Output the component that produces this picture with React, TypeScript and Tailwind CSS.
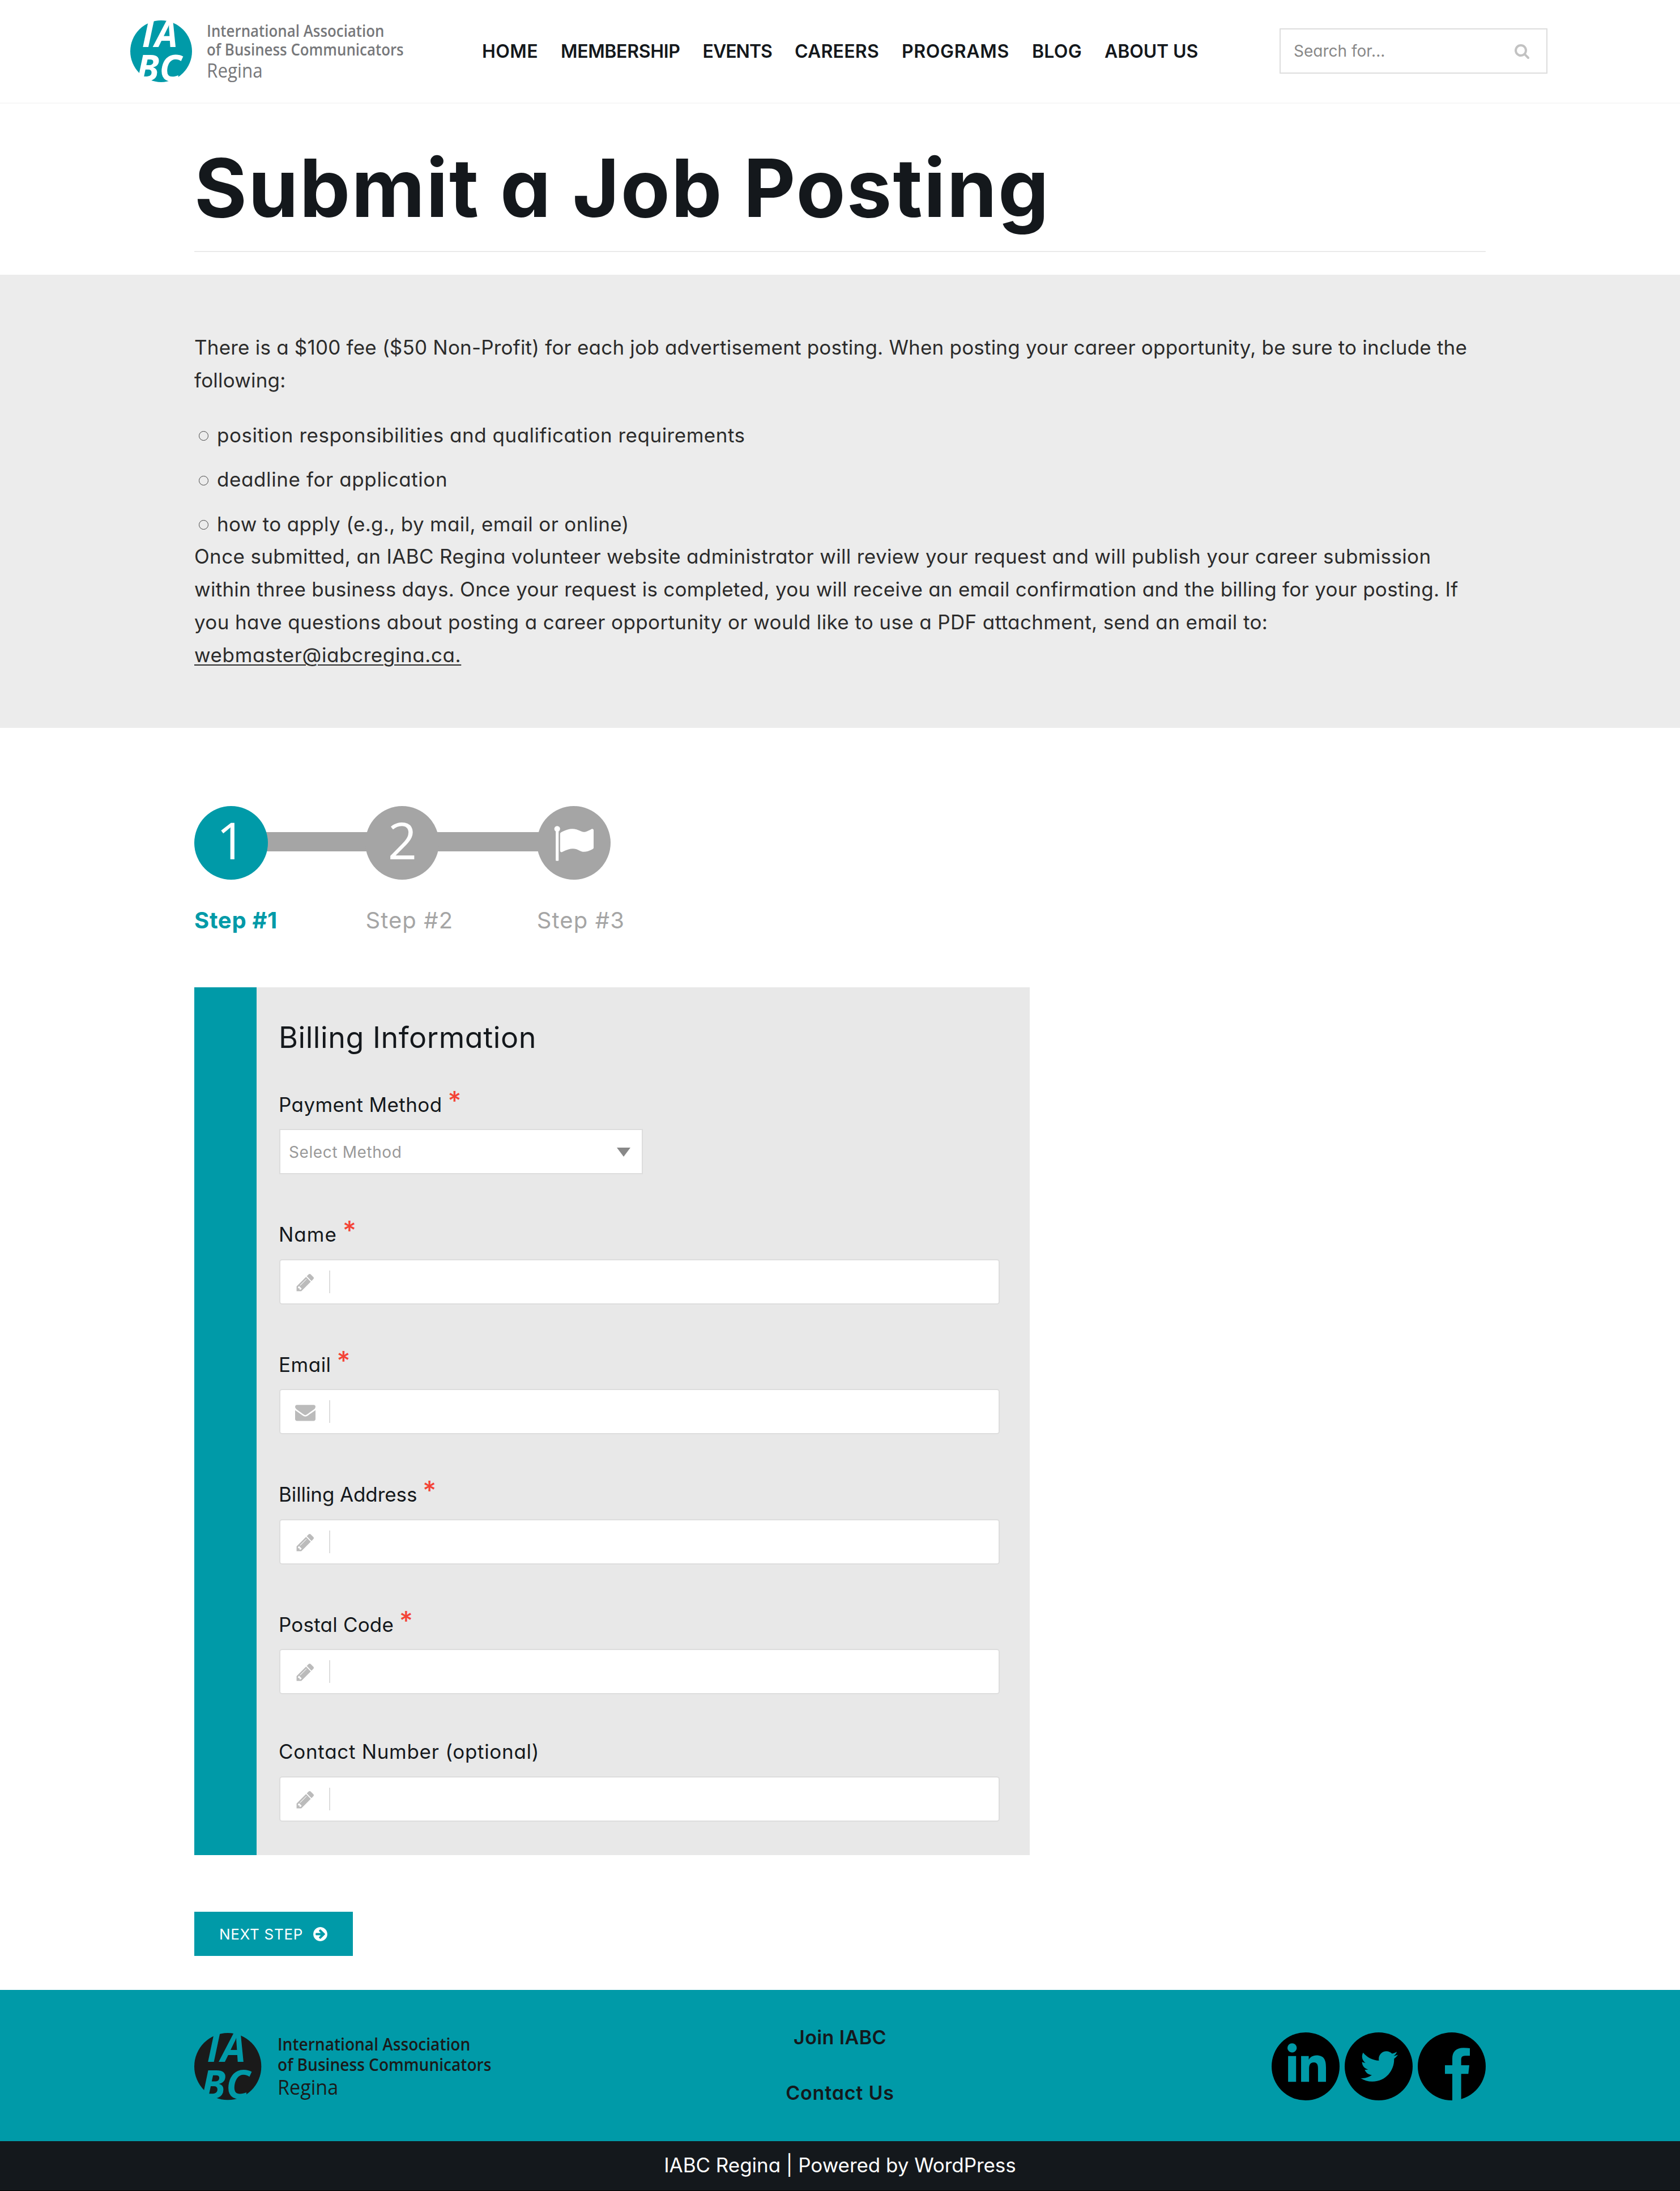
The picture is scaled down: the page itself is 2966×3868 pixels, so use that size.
import type { ReactNode } from "react";
import { FaLinkedinIn, FaTwitter } from "react-icons/fa";

const PENCIL =
  "M491 1536l91-91-235-235-91 91v107h128v128h107zm523-928q0-22-22-22-10 0-17 7l-542 542q-7 7-7 17 0 22 22 22 10 0 17-7l542-542q7-7 7-17zm-54-192l416 416-832 832h-416v-416zm683 96q0 53-37 90l-166 166-416-416 166-165q36-38 90-38 53 0 91 38l235 234q37 39 37 91z";
const ENVELOPE =
  "M1792 710v794q0 66-47 113t-113 47h-1472q-66 0-113-47t-47-113v-794q44 49 101 87 362 246 497 345 57 42 92.5 65.5t94.5 48 110 24.5h2q51 0 110-24.5t94.5-48 92.5-65.5q170-123 498-345 57-39 100-87zm0-294q0 79-49 151t-122 123q-376 261-468 325-10 7-42.5 31t-54 38.5-52 32.5-57.5 27-50 9h-2q-23 0-50-9t-57.5-27-52-32.5-54-38.5-42.5-31q-91-64-262-182.5t-205-142.5q-62-42-117-115.5t-55-136.5q0-78 41.5-130t118.5-52h1472q65 0 112.5 47t47.5 113z";
const FLAG =
  "M320 256q0 72-64 110v1266q0 13-9.5 22.5t-22.5 9.5h-64q-13 0-22.5-9.5t-9.5-22.5v-1266q-64-38-64-110 0-53 37.5-90.5t90.5-37.5 90.5 37.5 37.5 90.5zm1472 64v763q0 25-12.5 38.5t-39.5 27.5q-215 116-369 116-61 0-123.5-22t-108.5-48-115.5-48-142.5-22q-192 0-464 146-17 9-33 9-26 0-45-19t-19-45v-742q0-32 31-55 21-14 79-43 236-120 421-120 107 0 200 29t219 88q38 19 88 19 54 0 117.5-21t110-47 88-47 54.5-21q26 0 45 19t19 45z";
const ARROW_CIRCLE =
  "M1413 896q0-27-18-45l-91-91-362-362q-18-18-45-18t-45 18l-91 91q-18 18-18 45t18 45l189 189h-502q-26 0-45 19t-19 45v128q0 26 19 45t45 19h502l-189 189q-19 19-19 45t19 45l91 91q18 18 45 18t45-18l362-362 91-91q18-18 18-45zm251 0q0 209-103 385.5t-279.5 279.5-385.5 103-385.5-103-279.5-279.5-103-385.5 103-385.5 279.5-279.5 385.5-103 385.5 103 279.5 279.5 103 385.5z";
const SEARCH =
  "M1216 832q0-185-131.5-316.5t-316.5-131.5-316.5 131.5-131.5 316.5 131.5 316.5 316.5 131.5 316.5-131.5 131.5-316.5zm512 832q0 52-38 90t-90 38q-54 0-90-38l-343-342q-179 124-399 124-143 0-273.5-55.5t-225-150-150-225-55.5-273.5 55.5-273.5 150-225 225-150 273.5-55.5 273.5 55.5 225 150 150 225 55.5 273.5q0 220-124 399l343 343q37 37 37 90z";

function Icon({ d, className }: { d: string; className: string }) {
  return (
    <svg viewBox="0 0 1792 1792" fill="currentColor" className={className}>
      <path d={d} />
    </svg>
  );
}

/* Sized in em, so the header and the footer share one lockup. */
function Logo({ disc, letters, className }: { disc: string; letters: string; className: string }) {
  return (
    <div className={`flex shrink-0 items-start whitespace-nowrap font-['Open_Sans',sans-serif] ${className}`}>
      <svg viewBox="0 0 326 326" className="h-[3.893em] w-[3.893em] shrink-0 overflow-visible">
        <circle cx="163" cy="163" r="163" fill={disc} />
        <g fill={letters} fontFamily="Open Sans" fontStyle="italic" fontWeight="700" fontSize="192">
          <text x="62 130" y="141">IA</text>
          <text x="34 154" y="319">BC</text>
        </g>
      </svg>
      <div className="ml-[0.94em] origin-left scale-x-[0.924] pt-[0.06em]">
        <div className="font-semibold leading-[1.18em]">International Association</div>
        <div className="font-semibold leading-[1.18em]">of Business Communicators</div>
        <div className="text-[1.214em] leading-[1.18em]">Regina</div>
      </div>
    </div>
  );
}

const NAV = [
  { label: "HOME", cls: "tracking-[0.4px]" },
  { label: "MEMBERSHIP", cls: "tracking-[-0.34px]" },
  { label: "EVENTS", cls: "tracking-[-0.97px]" },
  { label: "CAREERS", cls: "tracking-[0.23px]" },
  { label: "PROGRAMS", cls: "tracking-[0.68px]" },
  { label: "BLOG", cls: "tracking-[0.3px]" },
  { label: "ABOUT US", cls: "tracking-[-0.1px]" },
];

function Header() {
  return (
    <header className="flex h-[183px] items-start border-b-2 border-[#f7f7f7] pl-[230px]">
      <div className="w-[621px] shrink-0 pt-[36px]">
        <Logo disc="#009aa8" letters="#ffffff" className="text-[28px] text-[#77787b]" />
      </div>
      <nav className="flex w-[1408px] shrink-0 gap-10 pt-[67px] text-[32px] font-semibold leading-[48px]">
        {NAV.map((n) => (
          <a key={n.label} className={n.cls}>{n.label}</a>
        ))}
      </nav>
      <div className="mt-[50px] flex h-[80px] w-[473px] items-center justify-between border-2 border-[#dddddd] pl-[23px] pr-[29px] text-[28px] text-[#888888]">
        <span>Search for...</span>
        <Icon d={SEARCH} className="h-[28px] w-[28px] text-[#c2c2c2]" />
      </div>
    </header>
  );
}

function Bullet({ children, className }: { children: ReactNode; className: string }) {
  return (
    <li className={`flex items-center whitespace-nowrap ${className}`}>
      <span className="ml-[8px] mr-[15px] mt-[2px] h-[17px] w-[17px] shrink-0 rounded-full border border-[#444444]" />
      {children}
    </li>
  );
}

function Intro() {
  return (
    <section className="h-[800px] bg-[#ececec] pt-[100px]">
      <div className="mx-auto w-[2280px] whitespace-nowrap text-[35px] leading-[57.8px] text-[#2b2b2b]">
        <p>
          <span className="block tracking-[0.2px]">There is a $100 fee ($50 Non-Profit) for each job advertisement posting. When posting your career opportunity, be sure to include the</span>
          <span className="block tracking-[0.2px]">following:</span>
        </p>
        <ul className="mt-[39.5px] flex flex-col gap-[20.5px]">
          <Bullet className="tracking-[0.51px]">position responsibilities and qualification requirements</Bullet>
          <Bullet className="tracking-[0.6px]">deadline for application</Bullet>
          <Bullet className="tracking-[0.33px]">how to apply (e.g., by mail, email or online)</Bullet>
        </ul>
        <p>
          <span className="block tracking-[0.35px]">Once submitted, an IABC Regina volunteer website administrator will review your request and will publish your career submission</span>
          <span className="block tracking-[0.27px]">within three business days. Once your request is completed, you will receive an email confirmation and the billing for your posting. If</span>
          <span className="block tracking-[0.37px]">you have questions about posting a career opportunity or would like to use a PDF attachment, send an email to:</span>
          <a className="tracking-[0.6px] underline decoration-2 underline-offset-[4px]">webmaster@iabcregina.ca.</a>
        </p>
      </div>
    </section>
  );
}

function Step({ mark, label, active, last }: { mark: ReactNode; label: string; active?: boolean; last?: boolean }) {
  return (
    <div className="w-[302.4px]">
      <div className="flex items-center">
        <div
          className={`z-10 flex h-[130px] w-[130px] shrink-0 justify-center rounded-full font-['Open_Sans',sans-serif] text-[90px] font-medium leading-[118px] text-white ${active ? "bg-[#009aa8]" : "bg-[#a5a5a5]"}`}
        >
          {mark}
        </div>
        {!last && <div className="-mx-[8px] mb-[4px] h-[34px] grow bg-[#a5a5a5]" />}
      </div>
      <div className={`mt-[42px] text-[40px] leading-[60px] ${active ? "font-bold tracking-[0.7px] text-[#009aa8]" : "tracking-[1.1px] text-[#a5a5a5]"}`}>
        {label}
      </div>
    </div>
  );
}

function Label({ children, required, className }: { children: ReactNode; required?: boolean; className: string }) {
  return (
    <div className="-ml-[1px] flex h-[58px] items-start text-[35px] leading-[58px]">
      <span className={className}>{children}</span>
      {required && <span className="ml-[10px] text-[46px] font-medium leading-[45px] text-[#f44336]">*</span>}
    </div>
  );
}

function TextInput({ icon }: { icon: string }) {
  return (
    <div className="mt-[14.4px] flex h-[80px] w-[1272px] items-center rounded-[5px] border-2 border-[#dddddd] bg-white pl-[26px]">
      <Icon d={icon} className="mt-[2px] h-[36px] w-[36px] text-[#bbbbbb]" />
      <div className="ml-[24px] h-[40px] w-[2px] bg-[#dddddd]" />
    </div>
  );
}

const FIELDS = [
  { label: "Name", cls: "tracking-[1px]", icon: PENCIL },
  { label: "Email", cls: "tracking-[0.5px]", icon: ENVELOPE },
  { label: "Billing Address", cls: "tracking-[-0.1px]", icon: PENCIL },
  { label: "Postal Code", cls: "tracking-[0.2px]", icon: PENCIL },
];

function BillingPanel() {
  return (
    <div className="flex h-[1532px] w-[1475px] bg-[#e8e8e8]">
      <div className="w-[110px] shrink-0 bg-[#009aa8]" />
      <div className="pl-[40px] pt-[50px]">
        <h2 className="-ml-[1px] text-[52px] leading-[78px] tracking-[0.55px]">Billing Information</h2>
        <div className="mt-[49.6px]">
          <Label required className="tracking-[0.4px]">Payment Method</Label>
          <div className="mt-[14.4px] flex h-[80px] w-[642px] items-center justify-between border-2 border-[#dddddd] bg-white pl-[15px] pr-[20px] pt-[2px] text-[28px] tracking-[0.6px] text-[#999999]">
            Select Method
            <svg viewBox="0 0 24 16" className="h-[16px] w-[24px]">
              <path d="M0 0H24L12 16Z" fill="#888888" />
            </svg>
          </div>
        </div>
        {FIELDS.map((f) => (
          <div key={f.label} className="mt-[77.2px]">
            <Label required className={f.cls}>{f.label}</Label>
            <TextInput icon={f.icon} />
          </div>
        ))}
        <div className="mt-[72px]">
          <Label className="tracking-[0.7px]">Contact Number (optional)</Label>
          <TextInput icon={PENCIL} />
        </div>
      </div>
    </div>
  );
}

function Footer() {
  return (
    <footer>
      <div className="h-[267px] bg-[#009aa8]">
        <div className="mx-auto grid w-[2280px] grid-cols-3">
          <div className="pt-[76px]">
            <Logo disc="#1a1a1a" letters="#009aa8" className="text-[30.4px] text-[#1a1a1a]" />
          </div>
          <div className="flex flex-col items-center gap-[40px] pt-[55px] text-[34px] font-semibold leading-[58px]">
            <a className="tracking-[0.4px]">Join IABC</a>
            <a className="tracking-[0.8px]">Contact Us</a>
          </div>
          <div className="flex justify-end gap-[9px] pt-[75px] text-[#009aa8]">
            <div className="flex h-[120px] w-[120px] items-center justify-center rounded-full bg-black">
              <FaLinkedinIn className="mb-[4px] ml-[4px] h-[78px] w-[68px]" />
            </div>
            <div className="flex h-[120px] w-[120px] items-center justify-center rounded-full bg-black">
              <FaTwitter className="ml-[2px] h-[66px] w-[66px]" />
            </div>
            <svg viewBox="0 0 360 360" className="h-[120px] w-[120px]">
              <circle cx="180" cy="180" r="180" fill="#000000" />
              <path
                d="M183 360V220H144V174H183V138C183 102 204 82 243 82Q262 82 276 84V124H250Q230 124 230 142V174H273L268 220H230V360Z"
                fill="currentColor"
              />
            </svg>
          </div>
        </div>
      </div>
      <div className="h-[88px] border-b border-black bg-[#14181c] text-center text-[35px] leading-[85px] tracking-[-0.05px] text-white">
        IABC Regina | Powered by WordPress
      </div>
    </footer>
  );
}

export default function App() {
  return (
    <div className="w-[2966px] bg-white font-['Inter',sans-serif] text-[#14181c] [font-feature-settings:'cv11']">
      <Header />
      <div className="mx-auto h-[302px] w-[2280px] pt-[64px]">
        <h1 className="border-b-2 border-[#eaeaea] pb-[28px] text-[142px] font-[660] leading-[168px] tracking-[2.2px]">Submit a Job Posting</h1>
      </div>
      <Intro />
      <main className="mx-auto h-[2228px] w-[2280px] pt-[138px]">
        <div className="flex">
          <Step mark="1" label="Step #1" active />
          <Step mark="2" label="Step #2" />
          <Step mark={<Icon d={FLAG} className="mr-[1px] mt-[30px] h-[72px] w-[72px]" />} label="Step #3" last />
        </div>
        <div className="pt-[88px]">
          <BillingPanel />
        </div>
        <button className="mt-[100px] flex h-[78px] w-[280px] items-center bg-[#009aa8] pl-[44px] text-[26px] tracking-[0.7px] text-white">
          NEXT STEP
          <Icon d={ARROW_CIRCLE} className="ml-[16px] h-[29px] w-[29px]" />
        </button>
      </main>
      <Footer />
    </div>
  );
}
